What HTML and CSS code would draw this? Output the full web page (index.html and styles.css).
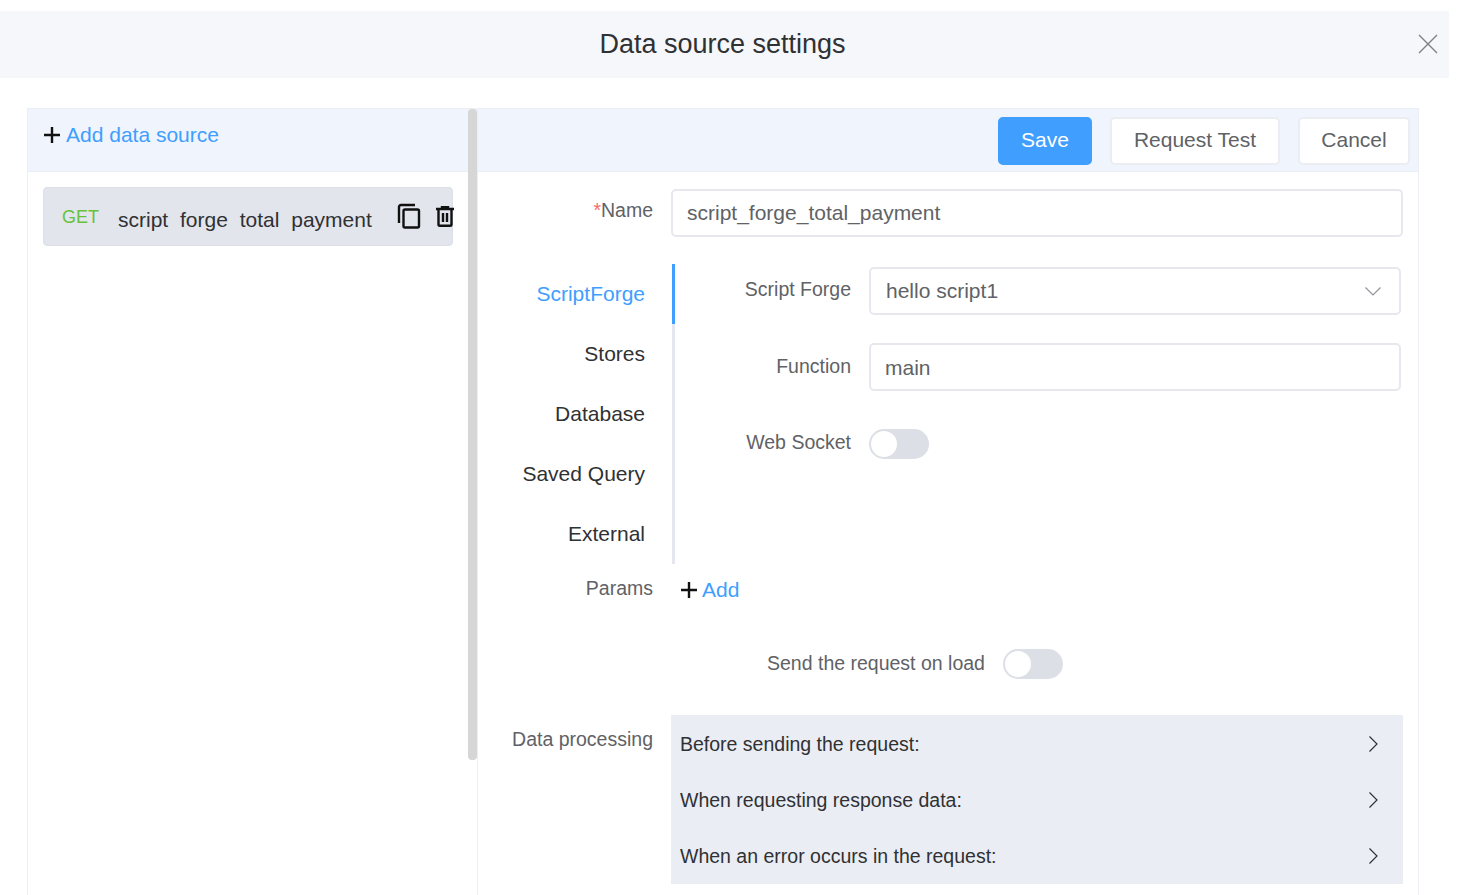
FILE: index.html
```html
<!DOCTYPE html>
<html>

<head>
  <link rel="stylesheet" href="styles.css">
</head>

<body>
  <header class="dialog-head">
    <h1 class="dialog-title">Data source settings</h1>
    <svg class="close-icon" viewBox="0 0 20 20"><path d="M1 1L19 19M19 1L1 19"/></svg>
  </header>

  <div class="panel">
    <aside class="side">
      <div class="bar bar-left">
        <svg class="plus-icon" viewBox="0 0 18 18"><path d="M9 1V17M1 9H17"/></svg>
        <span class="link">Add data source</span>
      </div>
      <div class="source-item">
        <span class="method">GET</span>
        <span class="source-name">script forge total payment</span>
        <svg class="copy-icon" viewBox="0 0 24 26"><path d="M18 2H4C2.9 2 2 2.9 2 4V20"/><rect x="6.5" y="6.5" width="15.500" height="18" rx="1.500"/></svg>
        <svg class="trash-icon" viewBox="0 0 18 21"><path d="M0 3H18M6 3V1.200H12V3M2.500 3V18.500C2.500 19.300 3.200 19.800 4 19.800H14C14.800 19.800 15.500 19.300 15.500 18.500V3M7 7V16M11 7V16"/></svg>
      </div>
      <div class="scroll-thumb"></div>
    </aside>

    <main class="main">
      <div class="bar bar-right">
        <button class="btn btn-primary">Save</button>
        <button class="btn btn-request">Request Test</button>
        <button class="btn btn-cancel">Cancel</button>
      </div>

      <div class="form">
        <div class="row row-name">
          <label class="label"><span class="star">*</span>Name</label>
          <input class="input input-name" type="text" value="script_forge_total_payment">
        </div>

        <div class="tabs">
          <div class="tab-list">
            <div class="tab active">ScriptForge</div>
            <div class="tab">Stores</div>
            <div class="tab">Database</div>
            <div class="tab">Saved Query</div>
            <div class="tab">External</div>
          </div>
          <div class="tab-body">
            <div class="sub-row">
              <label class="sub-label">Script Forge</label>
              <div class="input select">
                <span>hello script1</span>
                <svg class="select-arrow" viewBox="0 0 16 9"><path d="M0.500 0.500L8 8L15.500 0.500"/></svg>
              </div>
            </div>
            <div class="sub-row sub-row-function">
              <label class="sub-label">Function</label>
              <input class="input input-sub" type="text" value="main">
            </div>
            <div class="sub-row sub-row-switch">
              <label class="sub-label">Web Socket</label>
              <span class="switch"><span class="knob"></span></span>
            </div>
          </div>
        </div>

        <div class="row row-params">
          <label class="label">Params</label>
          <div class="add-param">
            <svg class="plus-icon" viewBox="0 0 18 18"><path d="M9 1V17M1 9H17"/></svg>
            <span class="link">Add</span>
          </div>
        </div>

        <div class="row-load">
          <label class="load-label">Send the request on load</label>
          <span class="switch"><span class="knob"></span></span>
        </div>

        <div class="row row-process">
          <label class="label">Data processing</label>
          <div class="process-box">
            <div class="process-row">
              <span>Before sending the request:</span>
              <svg class="chevron" viewBox="0 0 9 16"><path d="M0.500 0.500L8 8L0.500 15.500"/></svg>
            </div>
            <div class="process-row">
              <span>When requesting response data:</span>
              <svg class="chevron" viewBox="0 0 9 16"><path d="M0.500 0.500L8 8L0.500 15.500"/></svg>
            </div>
            <div class="process-row">
              <span>When an error occurs in the request:</span>
              <svg class="chevron" viewBox="0 0 9 16"><path d="M0.500 0.500L8 8L0.500 15.500"/></svg>
            </div>
          </div>
        </div>
      </div>
    </main>
  </div>
</body>

</html>
```

FILE: styles.css
```css
html,
body {
  height: 895px;
  overflow: hidden;
}

body {
  margin: 0;
  padding-top: 11px;
  box-sizing: border-box;
  background-color: #fff;
  font-family: 'Liberation Sans', Arial, sans-serif;
  font-size: 21px;
  color: #303133;
}

svg {
  fill: none;
  flex: none;
}

.dialog-head {
  display: grid;
  grid-template-columns: 1fr auto 1fr;
  align-items: center;
  width: 1449px;
  height: 67px;
  padding-right: 4px;
  box-sizing: border-box;
  background-color: #f5f7fb;
}

.dialog-title {
  grid-column: 2;
  margin: 0;
  font-size: 27px;
  font-weight: normal;
  color: #303133;
}

.close-icon {
  grid-column: 3;
  justify-self: end;
  width: 20px;
  height: 20px;
  margin-right: 7px;
  margin-bottom: 2px;
  stroke: #7d8085;
  stroke-width: 1.400;
}

.panel {
  display: flex;
  width: 1392px;
  height: 790px;
  margin: 30px 0 0 27px;
  box-sizing: border-box;
  border: 1px solid #ebeef5;
  border-bottom: 0;
}

.side {
  position: relative;
  width: 450px;
  flex: none;
  box-sizing: border-box;
  border-right: 1px solid #ebeef5;
}

.bar {
  display: flex;
  align-items: center;
  height: 63px;
  box-sizing: border-box;
  background-color: #f0f4fc;
  border-bottom: 1px solid #ebeef5;
}

.bar-left {
  padding: 0 0 11px 15px;
}

.bar-left .plus-icon {
  margin-right: 5px;
}

.bar-right {
  justify-content: flex-end;
  gap: 18px;
  padding-top: 1px;
  padding-right: 8px;
}

.plus-icon {
  width: 18px;
  height: 18px;
  margin-right: 4px;
  stroke: #111;
  stroke-width: 2.400;
}

.link {
  color: #409eff;
  font-size: 21px;
}

.source-item {
  display: flex;
  align-items: center;
  height: 59px;
  margin: 15px 0 0 15px;
  width: 410px;
  box-sizing: border-box;
  padding-left: 18px;
  background-color: #e2e5ec;
  border: 1px solid #dcdfe6;
  border-radius: 4px;
}

.method {
  width: 56px;
  flex: none;
  margin-top: 1px;
  font-size: 18px;
  color: #67c23a;
}

.source-name {
  width: 279px;
  flex: none;
  margin-top: 6px;
  word-spacing: 6px;
  color: #303133;
}

.copy-icon {
  width: 24px;
  height: 26px;
  margin-right: 15px;
  margin-bottom: 1px;
  stroke: #111;
  stroke-width: 2.400;
}

.trash-icon {
  width: 18px;
  height: 21px;
  margin-bottom: 1px;
  stroke: #111;
  stroke-width: 2.400;
}

.scroll-thumb {
  position: absolute;
  top: 0;
  right: 0;
  width: 9px;
  height: 651px;
  border-radius: 4px;
  background-color: #d6d6d6;
}

.main {
  flex: 1;
}

.btn {
  height: 48px;
  padding: 0 0 2px;
  box-sizing: border-box;
  border: 2px solid #ebedf2;
  border-radius: 5px;
  background-color: #fff;
  color: #606266;
  font-family: inherit;
  font-size: 21px;
}

.btn-primary {
  width: 94px;
  background-color: #409eff;
  border-color: #409eff;
  color: #fff;
}

.btn-request {
  width: 170px;
}

.btn-cancel {
  width: 112px;
}

.form {
  padding-top: 17px;
}

.row {
  display: flex;
  gap: 18px;
}

.label {
  width: 175px;
  flex: none;
  text-align: right;
  font-size: 19.500px;
  color: #606266;
}

.star {
  color: #f56c6c;
}

.input {
  height: 48px;
  padding: 0 14px;
  box-sizing: border-box;
  border: 2px solid #e6e8ee;
  border-radius: 5px;
  background-color: #fff;
  font-family: inherit;
  font-size: 21px;
  color: #606266;
}

.row-name .label {
  padding-top: 10px;
}

.input-name {
  width: 732px;
}

.tabs {
  display: flex;
  height: 300px;
  margin-top: 27px;
}

.tab-list {
  width: 197px;
  flex: none;
  border-right: 3px solid #e4e7ed;
  box-sizing: border-box;
  position: relative;
}

.tab {
  height: 60px;
  padding-right: 27px;
  line-height: 60px;
  text-align: right;
}

.tab.active {
  margin-right: -3px;
  padding-right: 27px;
  border-right: 3px solid #409eff;
  color: #409eff;
}

.tab-body {
  display: flex;
  flex-direction: column;
  gap: 28px;
  padding-top: 3px;
}

.sub-row {
  display: flex;
  align-items: center;
  gap: 18px;
}

.sub-label {
  width: 176px;
  margin-bottom: 3px;
  text-align: right;
  font-size: 19.500px;
  color: #606266;
}

.select {
  display: flex;
  align-items: center;
  justify-content: space-between;
  width: 532px;
  padding-left: 15px;
  padding-right: 18px;
}

.select-arrow {
  width: 16px;
  height: 9px;
  stroke: #909399;
  stroke-width: 1.200;
}

.input-sub {
  width: 532px;
  padding-top: 2px;
}

.sub-row-function .sub-label {
  margin-bottom: 1px;
}

.sub-row-switch {
  margin-top: 10px;
}

.switch {
  display: block;
  width: 60px;
  height: 30px;
  flex: none;
  padding: 2px;
  box-sizing: border-box;
  border-radius: 15px;
  background-color: #dcdfe6;
}

.knob {
  display: block;
  width: 26px;
  height: 26px;
  border-radius: 50%;
  background-color: #fff;
}

.row-params {
  height: 85px;
  padding-top: 13px;
  box-sizing: border-box;
}

.add-param {
  display: flex;
  align-items: center;
  height: 24px;
  margin-left: 9px;
  margin-top: 1px;
}

.row-load {
  display: flex;
  align-items: center;
  gap: 18px;
  height: 30px;
  padding-left: 289px;
}

.load-label {
  margin-bottom: 2px;
  font-size: 19.500px;
  color: #606266;
}

.row-process {
  margin-top: 36px;
}

.row-process .label {
  padding-top: 13px;
}

.process-box {
  width: 732px;
  height: 169px;
  box-sizing: border-box;
  padding: 1px 25px 0 9px;
  font-size: 19.500px;
  background-color: #eaedf4;
}

.process-row {
  display: flex;
  align-items: center;
  justify-content: space-between;
  height: 56px;
  color: #303133;
}

.chevron {
  width: 9px;
  height: 16px;
  stroke: #303133;
  stroke-width: 1.200;
}
```
